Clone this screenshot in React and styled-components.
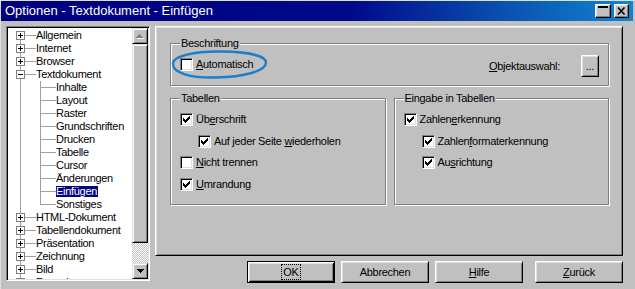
import React from "react";
import styled, { createGlobalStyle, css } from "styled-components";

const Global = createGlobalStyle`
  html, body { margin: 0; padding: 0; background: #c0c0c0; }
  body { font-family: "Liberation Sans", Arial, sans-serif; }
  * { box-sizing: border-box; }
`;

const LINE = "#a0a0a0";
const FONT = `font-family: "Liberation Sans", Arial, sans-serif; font-size: 11px; letter-spacing: -0.3px; color: #000;`;

const Window = styled.div`
  width: 635px;
  height: 289px;
  background: #c0c0c0;
  border-top: 1px solid #dfdfdf;
  border-left: 1px solid #dfdfdf;
  display: flex;
  flex-direction: column;
  overflow: hidden;
`;

const TitleBar = styled.div`
  height: 20px;
  margin-right: 2px;
  background: linear-gradient(to right, #000080 0%, #00088a 55%, #0a52b0 80%, #1084d0 100%);
  display: flex;
  align-items: center;
  padding: 0 4px 0 4px;
`;

const TitleText = styled.div`
  flex: 1;
  color: #fff;
  font-family: "Liberation Sans Narrow", "Liberation Sans", Arial, sans-serif;
  font-size: 13px;
  line-height: 20px;
  white-space: nowrap;
`;

const TitleButtons = styled.div`
  display: flex;
  gap: 3px;
`;

const TitleButton = styled.div`
  width: ${(p) => p.$w}px;
  height: 14px;
  background: #c0c0c0;
  border: 1px solid;
  border-color: #fff #000 #000 #fff;
  box-shadow: inset -1px -1px #808080, inset 1px 1px #dfdfdf;
  display: flex;
  align-items: flex-start;
  justify-content: center;
`;

const MinBar = styled.div`
  width: 10px;
  height: 2px;
  margin-top: 1px;
  background: #000;
`;

const Body = styled.div`
  flex: 1;
  display: flex;
  gap: 5px;
  padding: 5px 12px 0 5px;
`;

/* ---------- tree ---------- */

const TreeBox = styled.div`
  width: 144px;
  height: 255px;
  border: 1px solid;
  border-color: #808080 #fff #fff #808080;
  box-shadow: inset 1px 1px #000, inset -1px -1px #dfdfdf;
  padding: 1px;
  display: flex;
  background: #fff;
`;

const TreeList = styled.div`
  flex: 1;
  background: #fff;
  overflow: hidden;
  padding-top: 1px;
`;

const TreeRow = styled.div`
  height: 13px;
  display: flex;
  align-items: center;
  white-space: nowrap;
`;

const vline = (x, top, h) =>
  `linear-gradient(${LINE}, ${LINE}) ${x}px ${top}px / 1px ${h} no-repeat`;
const hline = (x, w) => `linear-gradient(${LINE}, ${LINE}) ${x}px 6px / ${w}px 1px no-repeat`;

const RootGutter = styled.div`
  width: 28px;
  height: 13px;
  flex: none;
  display: flex;
  align-items: center;
  padding-left: 8px;
  background: ${(p) =>
    p.$child
      ? vline(12, 0, "100%")
      : [p.$first ? vline(12, 6, "7px") : vline(12, 0, "100%"), hline(17, 11)].join(", ")};
`;

const ChildGutter = styled.div`
  width: 20px;
  height: 13px;
  flex: none;
  background: ${(p) => [vline(4, 0, p.$last ? "7px" : "100%"), hline(4, 16)].join(", ")};
`;

const Expander = styled.div`
  width: 9px;
  height: 9px;
  border: 1px solid #808080;
  background: #fff;
  position: relative;
  &::before {
    content: "";
    position: absolute;
    left: 1px;
    top: 3px;
    width: 5px;
    height: 1px;
    background: #000;
  }
  ${(p) =>
    p.$plus &&
    css`
      &::after {
        content: "";
        position: absolute;
        left: 3px;
        top: 1px;
        width: 1px;
        height: 5px;
        background: #000;
      }
    `}
`;

const TreeLabel = styled.span`
  ${FONT}
  line-height: 11px;
  height: 11px;
  padding: 0 1px 0 0;
  margin-left: 0;
  ${(p) =>
    p.$selected &&
    css`
      background: #000080;
      color: #fff;
    `}
`;

/* ---------- scrollbar ---------- */

const ScrollBar = styled.div`
  width: 16px;
  display: flex;
  flex-direction: column;
`;

const raised = css`
  background: #c0c0c0;
  border: 1px solid;
  border-color: #dfdfdf #000 #000 #dfdfdf;
  box-shadow: inset 1px 1px #fff, inset -1px -1px #808080;
`;

const ScrollButton = styled.div`
  ${raised}
  height: 16px;
  flex: none;
  display: flex;
  align-items: center;
  justify-content: center;
`;

const Thumb = styled.div`
  ${raised}
  height: 199px;
  flex: none;
`;

const Track = styled.div`
  flex: 1;
  background: repeating-conic-gradient(#fff 0 25%, #c0c0c0 0 50%) 0 0 / 2px 2px;
`;

/* ---------- right side ---------- */

const RightCol = styled.div`
  width: 468px;
  display: flex;
  flex-direction: column;
  gap: 5px;
`;

const Panel = styled.div`
  height: 230px;
  border: 1px solid;
  border-color: #fff #000 #000 #fff;
  box-shadow: inset 1px 1px #dfdfdf, inset -1px -1px #808080;
  padding: 10px 13px 0 14px;
  display: flex;
  flex-direction: column;
  gap: 6px;
`;

const Group = styled.fieldset`
  margin: 0;
  min-width: 0;
  padding: ${(p) => p.$pad || "4px 9px 9px"};
  border: 1px solid #808080;
  box-shadow: inset 1px 1px #fff, 1px 1px #fff;
`;

const Legend = styled.legend`
  ${FONT}
  line-height: 13px;
  padding: 0 1px;
  background: #c0c0c0;
`;

const Columns = styled.div`
  display: grid;
  grid-template-columns: 1fr 1fr;
  gap: 8px;
`;

const CaptionRow = styled.div`
  display: flex;
  justify-content: space-between;
  align-items: flex-start;
`;

const CheckRow = styled.div`
  position: relative;
  height: ${(p) => p.$h || 21.5}px;
  display: flex;
  align-items: center;
  gap: 3px;
  padding-left: ${(p) => (p.$indent ? 18 : 0)}px;
`;

const Box = styled.div`
  width: 13px;
  height: 13px;
  flex: none;
  background: #fff;
  border: 1px solid;
  border-color: #808080 #fff #fff #808080;
  box-shadow: inset 1px 1px #000, inset -1px -1px #dfdfdf;
  display: flex;
  align-items: center;
  justify-content: center;
`;

const Label = styled.span`
  ${FONT}
  line-height: 13px;
  white-space: nowrap;
  u { text-decoration: underline; text-underline-offset: 1px; }
`;

const Ellipse = styled.svg`
  position: absolute;
  left: -10px;
  top: -8px;
  overflow: visible;
  pointer-events: none;
`;

const ObjGroup = styled.div`
  height: 22px;
  display: flex;
  align-items: center;
  gap: 21px;
`;

const ButtonRow = styled.div`
  display: flex;
  justify-content: flex-end;
  gap: 6px;
`;

const Button = styled.div`
  ${FONT}
  width: ${(p) => p.$w || 88}px;
  height: 22px;
  flex: none;
  background: #c0c0c0;
  display: flex;
  align-items: center;
  justify-content: center;
  line-height: 13px;
  margin-left: ${(p) => p.$ml || 0}px;
  border: 1px solid;
  ${(p) =>
    p.$default
      ? css`
          border-color: #000;
          box-shadow: inset 1px 1px #fff, inset -1px -1px #000, inset 2px 2px #dfdfdf,
            inset -2px -2px #808080;
        `
      : css`
          border-color: #fff #000 #000 #fff;
          box-shadow: inset 1px 1px #dfdfdf, inset -1px -1px #808080;
        `}
  u { text-decoration: underline; text-underline-offset: 1px; }
`;

const Focus = styled.span`
  outline: 1px dotted #000;
  outline-offset: 0;
  padding: 1px 1px 0;
`;

/* ---------- pieces ---------- */

const CHECK_PIXELS = [
  [6, 0], [5, 1], [6, 1], [0, 2], [4, 2], [5, 2], [6, 2],
  [0, 3], [1, 3], [3, 3], [4, 3], [5, 3], [0, 4], [1, 4], [2, 4], [3, 4], [4, 4],
  [1, 5], [2, 5], [3, 5], [2, 6],
];

const CheckMark = () => (
  <svg width="7" height="7" viewBox="0 0 7 7" shapeRendering="crispEdges">
    <path d={CHECK_PIXELS.map(([x, y]) => `M${x} ${y}h1v1h-1z`).join("")} fill="#000" />
  </svg>
);

const Check = ({ checked, indent, h, children, extra }) => (
  <CheckRow $indent={indent} $h={h}>
    {extra}
    <Box>{checked && <CheckMark />}</Box>
    <Label>{children}</Label>
  </CheckRow>
);

const tree = [
  { t: "Allgemein", root: true, plus: true },
  { t: "Internet", root: true, plus: true },
  { t: "Browser", root: true, plus: true },
  { t: "Textdokument", root: true, plus: false },
  { t: "Inhalte" },
  { t: "Layout" },
  { t: "Raster" },
  { t: "Grundschriften" },
  { t: "Drucken" },
  { t: "Tabelle" },
  { t: "Cursor" },
  { t: "Änderungen" },
  { t: "Einfügen", selected: true },
  { t: "Sonstiges", last: true },
  { t: "HTML-Dokument", root: true, plus: true },
  { t: "Tabellendokument", root: true, plus: true },
  { t: "Präsentation", root: true, plus: true },
  { t: "Zeichnung", root: true, plus: true },
  { t: "Bild", root: true, plus: true },
  { t: "Formel", root: true, plus: true },
];

const Arrow = ({ down }) =>
  down ? (
    <svg width="7" height="4" viewBox="0 0 7 4" shapeRendering="crispEdges">
      <path d="M0 0h7v1h-1v1h-1v1h-1v1h-1v-1h-1v-1h-1v-1h-1z" fill="#000" />
    </svg>
  ) : (
    <svg width="8" height="5" viewBox="0 0 8 5" shapeRendering="crispEdges">
      <path d="M4 1h1v1h1v1h1v1h1v1h-7z" fill="#fff" />
      <path d="M3 0h1v1h1v1h1v1h1v1h-7v-1h1v-1h1v-1h1z" fill="#808080" />
    </svg>
  );

export default function App() {
  return (
    <>
      <Global />
      <Window>
        <TitleBar>
          <TitleText>Optionen - Textdokument - Einfügen</TitleText>
          <TitleButtons>
            <TitleButton $w={16}>
              <MinBar />
            </TitleButton>
            <TitleButton $w={15}>
              <svg width="9" height="10" viewBox="0 0 9 10" style={{ marginTop: 1 }}>
                <path d="M1 1.5L7.5 8.5M7.5 1.5L1 8.5" stroke="#000" strokeWidth="1.6" />
              </svg>
            </TitleButton>
          </TitleButtons>
        </TitleBar>
        <Body>
          <TreeBox>
            <TreeList>
              {tree.map((it, i) => (
                <TreeRow key={it.t}>
                  {it.root ? (
                    <RootGutter $first={i === 0}>
                      <Expander $plus={it.plus} />
                    </RootGutter>
                  ) : (
                    <>
                      <RootGutter $child />
                      <ChildGutter $last={it.last} />
                    </>
                  )}
                  <TreeLabel $selected={it.selected}>{it.t}</TreeLabel>
                </TreeRow>
              ))}
            </TreeList>
            <ScrollBar>
              <ScrollButton>
                <Arrow />
              </ScrollButton>
              <Thumb />
              <Track />
              <ScrollButton>
                <Arrow down />
              </ScrollButton>
            </ScrollBar>
          </TreeBox>
          <RightCol>
            <Panel>
              <Group $pad="5px 9px 8px">
                <Legend>Beschriftung</Legend>
                <CaptionRow>
                  <Check
                    h={19}
                    extra={
                      <Ellipse width="100" height="34" viewBox="0 0 100 34">
                        <path
                          d="M3 17 C2 9 25 4 52 4.5 C80 5 96 9 96 15.5 C96 24 74 30 46 30.5 C20 31 3 26 3 17 Z"
                          fill="none"
                          stroke="#1c7dc9"
                          strokeWidth="2.4"
                        />
                      </Ellipse>
                    }
                  >
                    <u>A</u>utomatisch
                  </Check>
                  <ObjGroup>
                    <Label>
                      <u>O</u>bjektauswahl:
                    </Label>
                    <Button $w={18}>...</Button>
                  </ObjGroup>
                </CaptionRow>
              </Group>
              <Columns>
                <Group>
                  <Legend>Tabellen</Legend>
                  <Check checked>
                    Üb<u>e</u>rschrift
                  </Check>
                  <Check checked indent>
                    Auf jeder Seite <u>w</u>iederholen
                  </Check>
                  <Check>
                    <u>N</u>icht trennen
                  </Check>
                  <Check checked>
                    <u>U</u>mrandung
                  </Check>
                </Group>
                <Group>
                  <Legend>Eingabe in Tabellen</Legend>
                  <Check checked>
                    Zahlen<u>e</u>rkennung
                  </Check>
                  <Check checked indent>
                    Zahlen<u>f</u>ormaterkennung
                  </Check>
                  <Check checked indent>
                    Au<u>s</u>richtung
                  </Check>
                  <CheckRow />
                </Group>
              </Columns>
            </Panel>
            <ButtonRow>
              <Button $default>
                <Focus>OK</Focus>
              </Button>
              <Button>Abbrechen</Button>
              <Button>
                <u>H</u>ilfe
              </Button>
              <Button $ml={6}>
                <u>Z</u>urück
              </Button>
            </ButtonRow>
          </RightCol>
        </Body>
      </Window>
    </>
  );
}
